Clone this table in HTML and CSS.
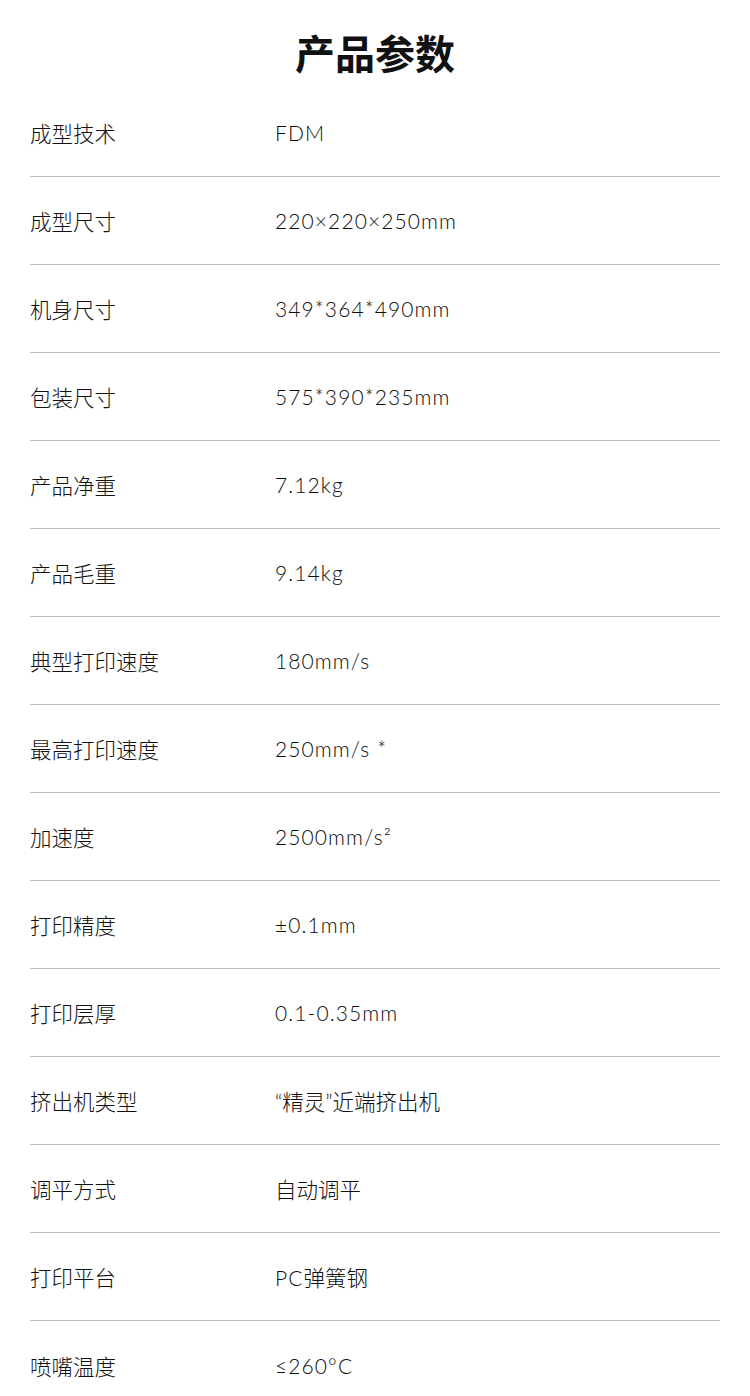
FILE: index.html
```html
<!DOCTYPE html>
<html lang="zh-CN">
<head>
<meta charset="utf-8">
<title>产品参数</title>
<link rel="stylesheet" href="styles.css">
</head>
<body>
<div class="page">
  <h1 class="title">产品参数</h1>
  <div class="specs">
    <div class="row"><span class="label">成型技术</span><span class="value">FDM</span></div>
    <div class="row"><span class="label">成型尺寸</span><span class="value">220×220×250mm</span></div>
    <div class="row"><span class="label">机身尺寸</span><span class="value">349*364*490mm</span></div>
    <div class="row"><span class="label">包装尺寸</span><span class="value">575*390*235mm</span></div>
    <div class="row"><span class="label">产品净重</span><span class="value">7.12kg</span></div>
    <div class="row"><span class="label">产品毛重</span><span class="value">9.14kg</span></div>
    <div class="row"><span class="label">典型打印速度</span><span class="value">180mm/s</span></div>
    <div class="row"><span class="label">最高打印速度</span><span class="value">250mm/s *</span></div>
    <div class="row"><span class="label">加速度</span><span class="value">2500mm/s²</span></div>
    <div class="row"><span class="label">打印精度</span><span class="value">±0.1mm</span></div>
    <div class="row"><span class="label">打印层厚</span><span class="value">0.1-0.35mm</span></div>
    <div class="row"><span class="label">挤出机类型</span><span class="value value-cjk">“精灵”近端挤出机</span></div>
    <div class="row"><span class="label">调平方式</span><span class="value value-cjk">自动调平</span></div>
    <div class="row"><span class="label">打印平台</span><span class="value">PC<span class="cjk">弹簧钢</span></span></div>
    <div class="row"><span class="label">喷嘴温度</span><span class="value">≤260°C</span></div>
  </div>
</div>
</body>
</html>
```
FILE: styles.css
```css
html, body {
  margin: 0;
  padding: 0;
  background: #ffffff;
}
.page {
  width: 750px;
  font-family: "Noto Sans CJK SC", "Noto Sans", sans-serif;
  color: #1e1e1e;
}
.title {
  margin: 0;
  height: 89px;
  box-sizing: border-box;
  padding-top: 16px;
  line-height: 72px;
  text-align: center;
  font-size: 40px;
  font-weight: 700;
  color: #111;
}
.specs {
  margin: 0 30px;
}
.row {
  display: flex;
  align-items: center;
  height: 88px;
  box-sizing: border-box;
  border-bottom: 1px solid #bcbcbc;
}
.row:last-child {
  border-bottom: none;
}
.label {
  width: 245px;
  flex: none;
  font-size: 21.5px;
  font-weight: 300;
  color: #111;
}
.value {
  font-family: "Lato", "Noto Sans CJK SC", sans-serif;
  font-weight: 300;
  font-size: 21px;
  color: #0d0d0d;
  letter-spacing: 1.1px;
}
.value-cjk {
  font-size: 21.5px;
  letter-spacing: 0;
  color: #111;
}
.cjk {
  font-family: "Noto Sans CJK SC", sans-serif;
  font-size: 21.5px;
  letter-spacing: 0;
  color: #111;
}
```
